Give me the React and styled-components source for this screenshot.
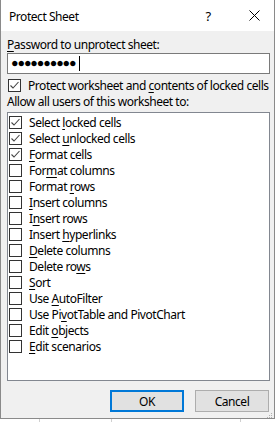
import React from "react";
import styled, { createGlobalStyle } from "styled-components";

const GlobalStyle = createGlobalStyle`
  html, body {
    margin: 0;
    padding: 0;
    background: #ffffff;
  }
  body {
    font-family: "Noto Sans", "Liberation Sans", sans-serif;
    font-size: 12px;
    letter-spacing: -0.45px;
    color: #000;
  }
`;

const Page = styled.div`
  width: 276px;
  height: 422px;
  overflow: hidden;
  display: flex;
  flex-direction: column;
`;

const Dialog = styled.div`
  width: 275px;
  height: 419px;
  box-sizing: border-box;
  border: 1px solid #8a8a8a;
  border-top: none;
  background: #f0f0f0;
  display: flex;
  flex-direction: column;
`;

const TitleBar = styled.div`
  height: 31px;
  background: #ffffff;
  display: flex;
  align-items: center;
  padding-left: 8px;
  flex-shrink: 0;
`;

const Title = styled.div`
  flex: 1;
  font-size: 12px;
  padding-top: 1px;
`;

const TitleButton = styled.div`
  width: ${(p) => p.$w}px;
  height: 31px;
  display: flex;
  align-items: center;
  justify-content: center;
  font-size: 13px;
`;

const Body = styled.div`
  flex: 1;
  display: flex;
  flex-direction: column;
  padding: 6px 4px 0 6px;
`;

const Label = styled.div`
  line-height: 16px;
  height: 16px;
  white-space: nowrap;
  margin-top: ${(p) => p.$mt || 0}px;
`;

const Key = styled.span`
  text-decoration: underline;
  text-underline-offset: 2px;
`;

const PasswordBox = styled.div`
  height: 21px;
  box-sizing: border-box;
  border: 1px solid #7a7a7a;
  background: #fff;
  display: flex;
  align-items: center;
  padding-left: 3px;
`;

const Dots = styled.span`
  font-size: 12.5px;
  letter-spacing: -1.1px;
  line-height: 1;
`;

const Caret = styled.span`
  width: 1px;
  height: 15px;
  background: #000;
  margin-left: 3px;
`;

const CheckRow = styled.div`
  display: flex;
  align-items: center;
  white-space: nowrap;
  height: ${(p) => p.$h || 16}px;
  margin-top: ${(p) => p.$mt || 0}px;
  padding-left: ${(p) => p.$pl || 0}px;
`;

const Box = styled.div`
  width: 13px;
  height: 13px;
  box-sizing: border-box;
  border: 1px solid #333;
  background: #fff;
  display: flex;
  align-items: center;
  justify-content: center;
  flex-shrink: 0;
  margin-right: 7px;
`;

const ListBox = styled.div`
  margin-top: 2px;
  height: 269px;
  box-sizing: border-box;
  border: 1px solid #828790;
  background: #fff;
  padding-top: 1px;
  display: flex;
  flex-direction: column;
`;

const Buttons = styled.div`
  display: flex;
  justify-content: flex-end;
  gap: 11px;
  margin-top: 9px;
  padding-right: 1px;
  position: relative;
`;

const Button = styled.div`
  width: 74px;
  height: 22px;
  box-sizing: border-box;
  border: ${(p) => (p.$primary ? "2px solid #0078d7" : "1px solid #adadad")};
  background: #e1e1e1;
  display: flex;
  align-items: center;
  justify-content: center;
`;

const Grip = styled.svg`
  position: absolute;
  right: -3px;
  bottom: -7px;
`;

const Sheet = styled.div`
  flex: 1;
  display: flex;
`;

const Cell = styled.div`
  width: ${(p) => p.$w}px;
  border-right: 1px solid #d0d0d0;
  flex-shrink: 0;
`;

const Check = () => (
  <svg width="11" height="11" viewBox="0 0 11 11">
    <path d="M1.5 5.5 L4 8 L9.5 2" fill="none" stroke="#444" strokeWidth="1.1" />
  </svg>
);

const options = [
  { pre: "Select ", key: "l", post: "ocked cells", on: true },
  { pre: "Select ", key: "u", post: "nlocked cells", on: true },
  { pre: "", key: "F", post: "ormat cells", on: true },
  { pre: "For", key: "m", post: "at columns" },
  { pre: "Format ", key: "r", post: "ows" },
  { pre: "", key: "I", post: "nsert columns" },
  { pre: "I", key: "n", post: "sert rows" },
  { pre: "Insert ", key: "h", post: "yperlinks" },
  { pre: "", key: "D", post: "elete columns" },
  { pre: "Delete ro", key: "w", post: "s" },
  { pre: "", key: "S", post: "ort" },
  { pre: "Use ", key: "A", post: "utoFilter" },
  { pre: "Use Pi", key: "v", post: "otTable and PivotChart" },
  { pre: "Edit ", key: "o", post: "bjects" },
  { pre: "", key: "E", post: "dit scenarios" },
];

export default function App() {
  return (
    <Page>
      <GlobalStyle />
      <Dialog>
        <TitleBar>
          <Title>Protect Sheet</Title>
          <TitleButton $w={52}>?</TitleButton>
          <TitleButton $w={40}>
            <svg width="11" height="11" viewBox="0 0 11 11">
              <path d="M0.5 0.5 L10.5 10.5 M10.5 0.5 L0.5 10.5" stroke="#000" strokeWidth="1" />
            </svg>
          </TitleButton>
        </TitleBar>
        <Body>
          <Label>
            <Key>P</Key>assword to unprotect sheet:
          </Label>
          <PasswordBox>
            <Dots>●●●●●●●●●●</Dots>
            <Caret />
          </PasswordBox>
          <CheckRow $h={16} $mt={3} $pl={1}>
            <Box>
              <Check />
            </Box>
            <span>
              Protect worksheet and <Key>c</Key>ontents of locked cells
            </span>
          </CheckRow>
          <Label $mt={1}>Allow all users of this worksheet to:</Label>
          <ListBox>
            {options.map((o, i) => (
              <CheckRow key={i} $pl={1}>
                <Box>{o.on && <Check />}</Box>
                <span>
                  {o.pre}
                  <Key>{o.key}</Key>
                  {o.post}
                </span>
              </CheckRow>
            ))}
          </ListBox>
          <Buttons>
            <Button $primary>OK</Button>
            <Button>Cancel</Button>
            <Grip width="6" height="6" viewBox="0 0 6 6">
              <rect x="4" y="0" width="1" height="1" fill="#b0b0b0" />
              <rect x="2" y="2" width="1" height="1" fill="#b0b0b0" />
              <rect x="4" y="2" width="1" height="1" fill="#b0b0b0" />
              <rect x="0" y="4" width="1" height="1" fill="#b0b0b0" />
              <rect x="2" y="4" width="1" height="1" fill="#b0b0b0" />
              <rect x="4" y="4" width="1" height="1" fill="#b0b0b0" />
            </Grip>
          </Buttons>
        </Body>
      </Dialog>
      <Sheet>
        <Cell $w={39} />
        <Cell $w={71} />
        <Cell $w={128} />
      </Sheet>
    </Page>
  );
}
